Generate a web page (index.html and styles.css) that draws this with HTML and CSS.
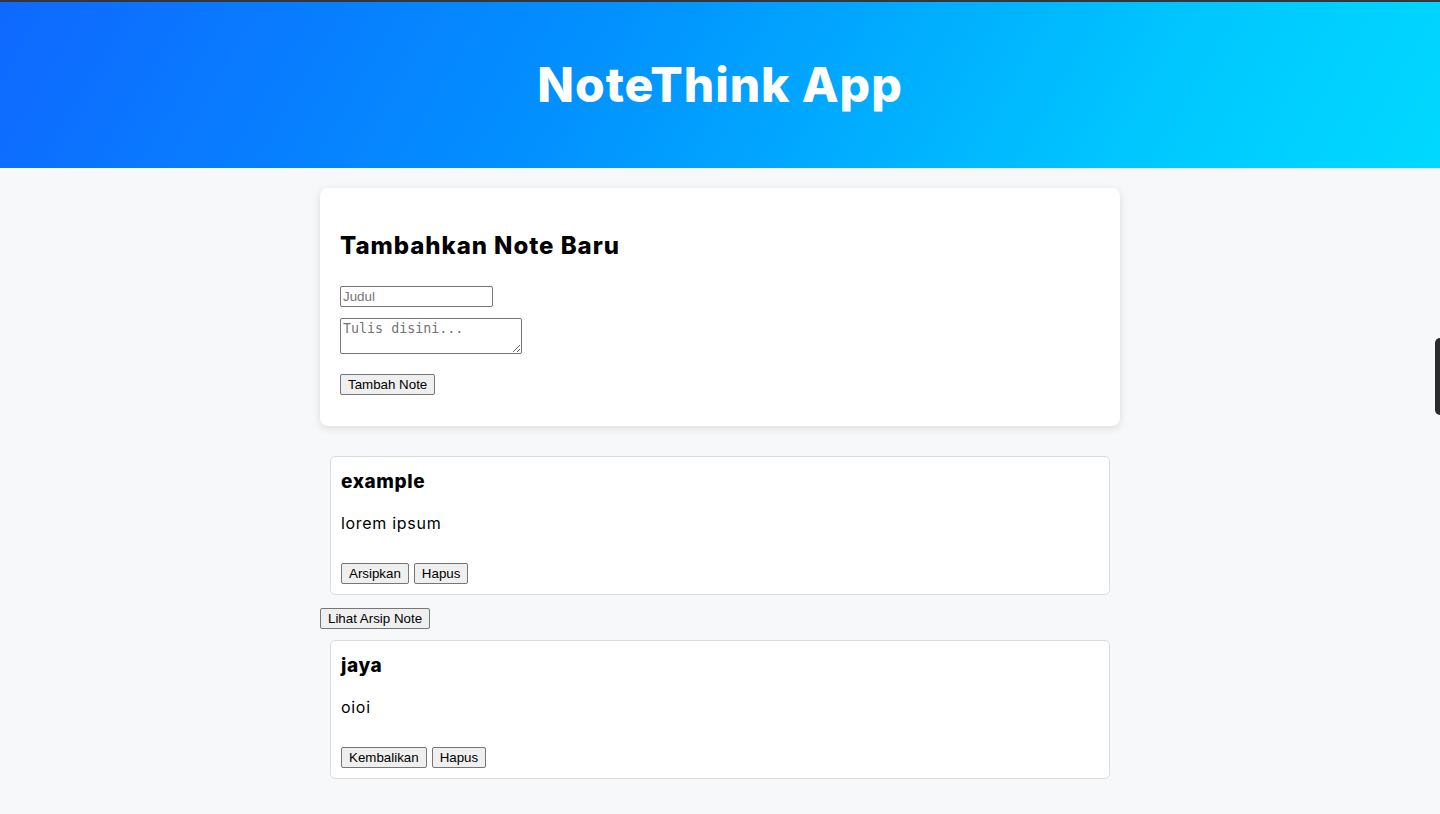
FILE: index.html
```html
<!DOCTYPE html>
<html lang="id">
<head>
<meta charset="utf-8">
<title>NoteThink App</title>
<link rel="stylesheet" href="styles.css">
</head>
<body>
<header class="app-header">
  <h1 class="app-title">NoteThink App</h1>
</header>
<main class="container">
  <section class="form-card">
    <h2 class="form-title">Tambahkan Note Baru</h2>
    <form class="note-form">
      <input class="field-title" type="text" placeholder="Judul">
      <textarea class="field-body" placeholder="Tulis disini..."></textarea>
      <button class="btn btn-submit" type="button">Tambah Note</button>
    </form>
  </section>
  <section class="note-list">
    <article class="note-card">
      <h3 class="note-title">example</h3>
      <p class="note-body">lorem ipsum</p>
      <div class="note-actions">
        <button class="btn" type="button">Arsipkan</button>
        <button class="btn" type="button">Hapus</button>
      </div>
    </article>
  </section>
  <div class="archive-toggle">
    <button class="btn" type="button">Lihat Arsip Note</button>
  </div>
  <section class="note-list archived">
    <article class="note-card">
      <h3 class="note-title">jaya</h3>
      <p class="note-body">oioi</p>
      <div class="note-actions">
        <button class="btn" type="button">Kembalikan</button>
        <button class="btn" type="button">Hapus</button>
      </div>
    </article>
  </section>
</main>
<div class="side-tab"></div>
</body>
</html>
```
FILE: styles.css
```css
* { box-sizing: border-box; }
html, body { margin: 0; padding: 0; }
body {
  background: #f7f8fa;
  font-family: Inter, "Noto Sans", sans-serif;
  color: #000;
  min-height: 814px;
}
.app-header {
  height: 168px;
  border-top: 2px solid #33373b;
  background: linear-gradient(120deg, #0f68ff 0%, #0290ff 40%, #00c8ff 80%, #00d9ff 100%);
  display: flex;
  align-items: center;
  justify-content: center;
}
.app-title {
  margin: 0;
  color: #fff;
  font-size: 48px;
  font-weight: 800;
  line-height: 60px;
  letter-spacing: 0.9px;
}
.container {
  width: 800px;
  margin: 20px auto 0;
}
.form-card {
  background: #fff;
  border-radius: 8px;
  box-shadow: 0 2px 8px rgba(0,0,0,0.12);
  padding: 20px;
}
.form-title {
  margin: 20px 0 22px;
  font-size: 24px;
  font-weight: 800;
  line-height: 36px;
  letter-spacing: 0.95px;
}
.note-form { display: flex; flex-direction: column; align-items: flex-start; }
.field-title {
  width: 153px;
  height: 21px;
  margin: 0 0 11px;
  padding: 1px 2px;
  border: 1px solid #767676;
  border-radius: 2px;
  font: 13.333px "Liberation Sans", Arial, sans-serif;
}
.field-title::placeholder { color: #757575; }
.field-body {
  width: 182px;
  height: 36px;
  margin: 0 0 20px;
  padding: 2px;
  border: 1px solid #767676;
  border-radius: 2px;
  font: 13.333px "DejaVu Sans Mono", "Liberation Mono", monospace;
  resize: both;
}
.field-body::placeholder { color: #757575; }
.btn {
  height: 21px;
  padding: 1px 7px;
  border: 1px solid #767676;
  border-radius: 2px;
  background: #efefef;
  color: #000;
  font: 13.333px "Liberation Sans", Arial, sans-serif;
  line-height: 17px;
}
.btn-submit { margin-bottom: 11px; }
.note-list { padding-top: 20px; }
.note-list.archived { padding-top: 0; }
.note-card {
  margin: 10px;
  padding: 10px;
  background: #fff;
  border: 1px solid #dcdcdc;
  border-radius: 5px;
}
.note-title {
  margin: 0;
  padding-top: 1px;
  font-size: 19px;
  font-weight: 800;
  line-height: 27px;
  letter-spacing: 0.6px;
}
.note-body {
  margin: 16px 0 28px;
  font-size: 16px;
  line-height: 24px;
  letter-spacing: 0.7px;
}
.note-actions { display: flex; gap: 5px; }
.archive-toggle { padding: 3px 0 1px; display: flex; }
.side-tab {
  position: fixed;
  right: 0;
  top: 338px;
  width: 5px;
  height: 77px;
  background: #2b2b2b;
  border-radius: 8px 0 0 8px;
}
```
